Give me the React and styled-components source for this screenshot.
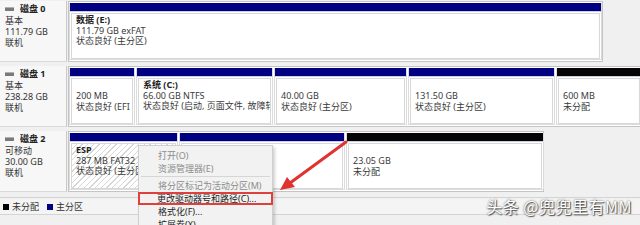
import React from 'react';
import styled, { createGlobalStyle } from 'styled-components';

const Global = createGlobalStyle`
  html, body { margin: 0; padding: 0; }
  body {
    width: 640px;
    height: 225px;
    overflow: hidden;
    background: #f0f0f0;
    font-family: "Noto Sans", "Noto Sans CJK SC", sans-serif;
    font-size: 9px;
    color: #1e1e1e;
  }
`;

const Page = styled.div`
  position: relative;
  width: 640px;
  height: 225px;
  overflow: hidden;
  background: #f0f0f0;
`;

const Disks = styled.div`
  display: flex;
  flex-direction: column;
  gap: 4px;
  padding-top: 1px;
  height: 198px;
  border-bottom: 1px solid #d4d4d4;
  box-sizing: border-box;
`;

const DiskRow = styled.div`
  display: flex;
  height: 61px;
  gap: 1px;
`;

const DiskLabel = styled.div`
  width: 67px;
  flex: none;
  background: #f7f7f7;
  border-right: 1px solid #c8c8c8;
  border-bottom: 1px solid #dadada;
  padding: 2px 0 0 5px;
  box-sizing: border-box;
  color: #333;
`;

const LabelLine = styled.div`
  height: 11px;
  line-height: 11px;
  white-space: nowrap;
`;

const DiskName = styled.div`
  display: flex;
  align-items: center;
  gap: 6px;
  height: 12px;
  line-height: 12px;
  font-weight: 700;
  color: #222;
`;

const DiskIcon = styled.span`
  display: inline-block;
  width: 9px;
  height: 3px;
  background: #7a7a7a;
  border-top: 1px solid #b0b0b0;
`;

const Parts = styled.div`
  display: flex;
  gap: 1px;
  background: #fff;
  border: 1px solid #c4c4c4;
  padding: 1px 0;
  width: ${p => p.$w}px;
  box-sizing: border-box;
  flex: none;
`;

const Part = styled.div`
  width: ${p => p.$w}px;
  flex: none;
  display: flex;
  flex-direction: column;
  border: 1px solid #dcdcdc;
  border-top: none;
  box-sizing: border-box;
  background: #fff;
`;

const PartHead = styled.div`
  height: 8px;
  background: ${p => (p.$free ? '#050505' : '#000080')};
  border-bottom: 1px solid #c8cde8;
  flex: none;
`;

const PartBody = styled.div`
  flex: 1;
  margin: 1px 1px 0;
  border: 1px solid #d8d8d8;
  padding: ${p => (p.$low ? '12px' : '1px')} 4px 0 4px;
  color: #3a3a3a;
  white-space: nowrap;
  overflow: hidden;
  background: ${p =>
    p.$sel
      ? 'repeating-linear-gradient(135deg, #fff 0 3px, #d6d6d6 3px 4px)'
      : '#fff'};
`;

const PartLine = styled.div`
  height: 10.5px;
  line-height: 10.5px;
  font-weight: ${p => (p.$bold ? 700 : 400)};
  color: ${p => (p.$bold ? '#222' : '#3a3a3a')};
`;

const Legend = styled.div`
  display: flex;
  align-items: center;
  gap: 4px;
  height: 15px;
  padding-left: 3px;
  border-bottom: 1px solid #d4d4d4;
  background: #f4f4f4;
  margin-top: 1px;
  color: #333;
`;

const Swatch = styled.span`
  width: 6px;
  height: 6px;
  background: ${p => p.$c};
  display: inline-block;
  margin-right: 1px;
`;

const LegendItem = styled.span`
  display: flex;
  align-items: center;
  gap: 2px;
  margin-right: 4px;
`;

const Menu = styled.div`
  position: absolute;
  left: 138px;
  top: 145px;
  width: 135px;
  height: 100px;
  background: #f2f2f2;
  border: 1px solid #cfcfcf;
  box-shadow: 2px 2px 3px rgba(0, 0, 0, 0.18);
  padding-top: 3px;
  box-sizing: border-box;
`;

const MenuItem = styled.div`
  height: 13px;
  box-sizing: border-box;
  white-space: nowrap;
  color: ${p => (p.$off ? '#8c8c8c' : '#1c1c1c')};
  border: ${p => (p.$mark ? '2px solid #e0403c' : 'none')};
  line-height: ${p => (p.$mark ? '9px' : '13px')};
  padding-left: ${p => (p.$mark ? '17px' : '19px')};
  margin: ${p => (p.$mark ? '0 -1px' : '0')};
`;

const MenuSep = styled.div`
  height: 1px;
  margin: 1px 2px 2px;
  background: #d6d6d6;
`;

const Arrow = styled.svg`
  position: absolute;
  left: 0;
  top: 0;
  pointer-events: none;
`;

const Watermark = styled.div`
  position: absolute;
  right: 8px;
  bottom: 7px;
  font-size: 16px;
  letter-spacing: 0.5px;
  color: #fff;
  text-shadow: 0 0 2px #444, 1px 1px 1px #555;
  font-family: "Noto Sans CJK SC", sans-serif;
`;

const disks = [
  {
    name: '磁盘 0', type: '基本', size: '111.79 GB', state: '联机', width: 535,
    parts: [{ w: 533, title: '数据  (E:)', lines: ['111.79 GB exFAT', '状态良好 (主分区)'] }],
  },
  {
    name: '磁盘 1', type: '基本', size: '238.28 GB', state: '联机', width: 573,
    parts: [
      { w: 66, lines: ['200 MB', '状态良好 (EFI 系统分区)'] },
      { w: 137, title: '系统  (C:)', lines: ['66.00 GB NTFS', '状态良好 (启动, 页面文件, 故障转储, 主分区)'] },
      { w: 133, lines: ['40.00 GB', '状态良好 (主分区)'] },
      { w: 147, lines: ['131.50 GB', '状态良好 (主分区)'] },
      { w: 86, free: true, lines: ['600 MB', '未分配'] },
    ],
  },
  {
    name: '磁盘 2', type: '可移动', size: '30.00 GB', state: '联机', width: 476,
    parts: [
      { w: 109, sel: true, title: 'ESP', lines: ['287 MB FAT32', '状态良好 (主分区)'] },
      { w: 166, lines: [] },
      { w: 198, free: true, lines: ['23.05 GB', '未分配'] },
    ],
  },
];

export default function App() {
  return (
    <Page>
      <Global />
      <Disks>
        {disks.map(d => (
          <DiskRow key={d.name}>
            <DiskLabel>
              <DiskName><DiskIcon />{d.name}</DiskName>
              <LabelLine>{d.type}</LabelLine>
              <LabelLine>{d.size}</LabelLine>
              <LabelLine>{d.state}</LabelLine>
            </DiskLabel>
            <Parts $w={d.width}>
              {d.parts.map((p, i) => (
                <Part key={i} $w={p.w}>
                  <PartHead $free={p.free} />
                  <PartBody $sel={p.sel} $low={!p.title}>
                    {p.title && <PartLine $bold>{p.title}</PartLine>}
                    {p.lines.map(l => <PartLine key={l}>{l}</PartLine>)}
                  </PartBody>
                </Part>
              ))}
            </Parts>
          </DiskRow>
        ))}
      </Disks>
      <Legend>
        <LegendItem><Swatch $c="#000" />未分配</LegendItem>
        <LegendItem><Swatch $c="#000080" />主分区</LegendItem>
      </Legend>

      <Menu>
        <MenuItem $off>打开(O)</MenuItem>
        <MenuItem $off>资源管理器(E)</MenuItem>
        <MenuSep />
        <MenuItem $off>将分区标记为活动分区(M)</MenuItem>
        <MenuItem $mark>更改驱动器号和路径(C)...</MenuItem>
        <MenuItem>格式化(F)...</MenuItem>
        <MenuItem>扩展卷(X)...</MenuItem>
      </Menu>

      <Arrow width="640" height="225" viewBox="0 0 640 225">
        <line x1="346" y1="142" x2="290" y2="183" stroke="#e0332f" strokeWidth="3" strokeLinecap="round" />
        <polygon points="280,190 287,177 295,187" fill="#e0332f" />
      </Arrow>

      <Watermark>头条 @兜兜里有MM</Watermark>
    </Page>
  );
}
